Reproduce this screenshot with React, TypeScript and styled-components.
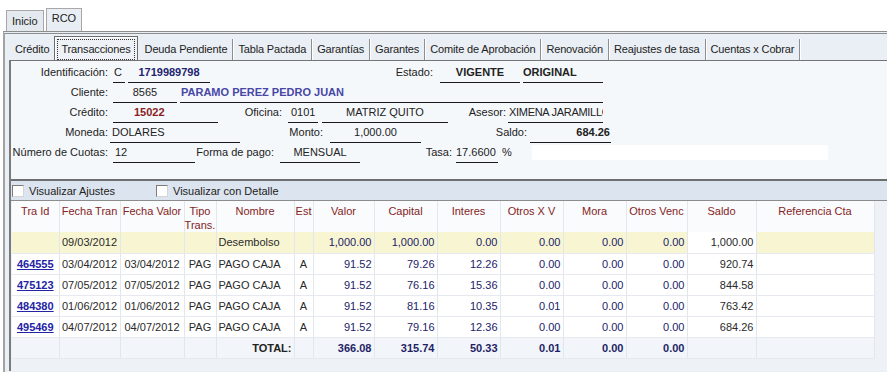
import React from "react";
import styled, { createGlobalStyle, css } from "styled-components";

const GlobalStyle = createGlobalStyle`
  html, body {
    margin: 0;
    padding: 0;
    background: #ffffff;
  }
  body {
    font-family: "Liberation Sans", Arial, sans-serif;
    font-size: 11px;
    color: #222222;
  }
`;

const Page = styled.div`
  width: 887px;
  height: 372px;
  overflow: hidden;
  padding-top: 8px;
  box-sizing: border-box;
`;

const OuterTabs = styled.div`
  display: flex;
  align-items: flex-end;
  height: 23px;
  padding-left: 6px;
`;

const OuterTab = styled.div<{ $active?: boolean }>`
  box-sizing: border-box;
  height: ${(p) => (p.$active ? 23 : 21)}px;
  padding: ${(p) => (p.$active ? "0 5px 4px" : "0 5px")};
  margin-left: ${(p) => (p.$active ? 2 : 0)}px;
  border: 1px solid #a8a8a8;
  border-bottom: none;
  background: ${(p) => (p.$active ? "#e9eef4" : "#e3e9ef")};
  display: flex;
  align-items: center;
`;

const OuterPanel = styled.div`
  margin-left: 3px;
  border-left: 2px solid #a3a3a3;
  border-top: 3px double #8d8d8d;
  background: #eaeff5;
  padding: 2px 0 0 4px;
  height: 340px;
`;

const InnerTabs = styled.div`
  display: flex;
  align-items: flex-end;
  height: 24px;
  border-bottom: 1px solid #767676;
  padding-left: 1px;
  letter-spacing: -0.15px;
`;

const InnerTab = styled.div<{ $active?: boolean; $first?: boolean }>`
  box-sizing: border-box;
  height: 21px;
  line-height: 21px;
  padding: 0 5px;
  white-space: nowrap;
  border-right: ${(p) => (p.$first ? "none" : "1px solid #8e8e8e")};
  box-shadow: ${(p) => (p.$first ? "none" : "1px 0 0 #ffffff")};
  ${(p) =>
    p.$active &&
    css`
      height: 24px;
      padding: 2px 2px 1px;
      margin: 0 2px 0 0;
      line-height: 19px;
      border: 1px solid #6c6c6c;
      border-bottom: none;
      box-shadow: inset 1px 1px 0 #ffffff;
      background: #eef2f7;
    `}
`;

const FocusBox = styled.span`
  display: block;
  padding: 0 3px;
  border: 1px dotted #333333;
`;

const Body = styled.div`
  border-left: 2px solid #7a7a7a;
`;

const FormPanel = styled.div`
  box-sizing: border-box;
  height: 118px;
  background: #f5f8fb;
  padding: 3px 0 0 0;
  display: flex;
  flex-direction: column;
  gap: 1px;
`;

const FieldRow = styled.div`
  display: flex;
  height: 19px;
  align-items: stretch;
`;

const Label = styled.div<{ $w: number; $pr?: number }>`
  width: ${(p) => p.$w}px;
  flex: none;
  box-sizing: border-box;
  text-align: right;
  padding-right: ${(p) => p.$pr ?? 2}px;
  line-height: 17px;
  white-space: nowrap;
`;

const Value = styled.div<{
  $w: number;
  $ml?: number;
  $align?: "left" | "center" | "right";
  $pl?: number;
  $pr?: number;
  $bold?: boolean;
  $color?: string;
  $tight?: boolean;
}>`
  width: ${(p) => p.$w}px;
  flex: none;
  box-sizing: border-box;
  margin-left: ${(p) => p.$ml ?? 0}px;
  padding-left: ${(p) => p.$pl ?? 0}px;
  padding-right: ${(p) => p.$pr ?? 0}px;
  text-align: ${(p) => p.$align ?? "left"};
  font-weight: ${(p) => (p.$bold ? 700 : 400)};
  color: ${(p) => p.$color ?? "#222222"};
  letter-spacing: ${(p) => (p.$tight ? "-0.3px" : "normal")};
  border-bottom: 1px solid #1a1a1a;
  line-height: 17px;
  white-space: nowrap;
  overflow: hidden;
`;

const Plain = styled.div<{ $ml?: number }>`
  margin-left: ${(p) => p.$ml ?? 0}px;
  line-height: 17px;
`;

const BlankInput = styled.div<{ $ml: number; $w: number }>`
  margin-left: ${(p) => p.$ml}px;
  width: ${(p) => p.$w}px;
  height: 15px;
  margin-top: 1px;
  background: #ffffff;
  border-radius: 2px;
`;

const CheckBand = styled.div`
  border-top: 2px solid #6e6e6e;
  border-bottom: 1px solid #8c8c8c;
  height: 19px;
  background: #dce5ef;
  display: flex;
  align-items: center;
  padding-left: 1px;
`;

const CheckGroup = styled.label<{ $w?: number }>`
  display: flex;
  align-items: center;
  gap: 5px;
  width: ${(p) => (p.$w ? `${p.$w}px` : "auto")};
`;

const CheckBox = styled.span`
  box-sizing: border-box;
  width: 12px;
  height: 12px;
  background: #ffffff;
  border: 1px solid #d4d4d4;
  border-top-color: #7b7b7b;
  border-left-color: #7b7b7b;
`;

const TableArea = styled.div`
  background: #eef2f7;
  height: 170px;
  padding-left: 1px;
`;

const Grid = styled.table`
  border-collapse: collapse;
  table-layout: fixed;
  width: 862px;
  background: #ffffff;
`;

const Th = styled.th`
  height: 30px;
  box-sizing: border-box;
  padding: 3px 0 0;
  vertical-align: top;
  text-align: center;
  font-weight: 400;
  line-height: 14px;
  color: #862424;
  background: #f9fbfd;
  border-right: 1px solid #e2e7ee;
`;

type Kind = "center" | "num" | "saldo" | "text";

const Td = styled.td<{ $kind: Kind; $bg?: string; $total?: boolean }>`
  height: 21px;
  box-sizing: border-box;
  padding: 0 2px;
  line-height: 20px;
  white-space: nowrap;
  overflow: hidden;
  border-right: 1px solid #e2e7ee;
  border-bottom: 1px solid #e6eaf0;
  background: ${(p) => p.$bg ?? "#ffffff"};
  text-align: ${(p) =>
    p.$kind === "num" || p.$kind === "saldo" ? "right" : p.$kind === "text" ? "left" : "center"};
  color: ${(p) => (p.$kind === "num" ? "#22226a" : "#2a2a2a")};
  ${(p) =>
    p.$total &&
    css`
      font-weight: 700;
      color: #1f1f66;
      background: #f2f5f9;
    `}
`;

const IdLink = styled.a`
  color: #2323a6;
  font-weight: 700;
  text-decoration: underline;
`;

type Row = {
  id: string;
  ft: string;
  fv: string;
  tipo: string;
  nombre: string;
  est: string;
  valor: string;
  capital: string;
  interes: string;
  oxv: string;
  mora: string;
  ov: string;
  saldo: string;
  first?: boolean;
};

const rows: Row[] = [
  { id: "", ft: "09/03/2012", fv: "", tipo: "", nombre: "Desembolso", est: "", valor: "1,000.00", capital: "1,000.00", interes: "0.00", oxv: "0.00", mora: "0.00", ov: "0.00", saldo: "1,000.00", first: true },
  { id: "464555", ft: "03/04/2012", fv: "03/04/2012", tipo: "PAG", nombre: "PAGO CAJA", est: "A", valor: "91.52", capital: "79.26", interes: "12.26", oxv: "0.00", mora: "0.00", ov: "0.00", saldo: "920.74" },
  { id: "475123", ft: "07/05/2012", fv: "07/05/2012", tipo: "PAG", nombre: "PAGO CAJA", est: "A", valor: "91.52", capital: "76.16", interes: "15.36", oxv: "0.00", mora: "0.00", ov: "0.00", saldo: "844.58" },
  { id: "484380", ft: "01/06/2012", fv: "01/06/2012", tipo: "PAG", nombre: "PAGO CAJA", est: "A", valor: "91.52", capital: "81.16", interes: "10.35", oxv: "0.01", mora: "0.00", ov: "0.00", saldo: "763.42" },
  { id: "495469", ft: "04/07/2012", fv: "04/07/2012", tipo: "PAG", nombre: "PAGO CAJA", est: "A", valor: "91.52", capital: "79.16", interes: "12.36", oxv: "0.00", mora: "0.00", ov: "0.00", saldo: "684.26" },
];

const columns = [
  { title: "Tra Id", w: 47 },
  { title: "Fecha Tran", w: 61 },
  { title: "Fecha Valor", w: 64 },
  { title: "Tipo Trans.", w: 32 },
  { title: "Nombre", w: 78 },
  { title: "Est", w: 19 },
  { title: "Valor", w: 61 },
  { title: "Capital", w: 63 },
  { title: "Interes", w: 63 },
  { title: "Otros X V", w: 63 },
  { title: "Mora", w: 63 },
  { title: "Otros Venc", w: 61 },
  { title: "Saldo", w: 69 },
  { title: "Referencia Cta", w: 118 },
];

const innerTabs = [
  "Crédito",
  "Transacciones",
  "Deuda Pendiente",
  "Tabla Pactada",
  "Garantías",
  "Garantes",
  "Comite de Aprobación",
  "Renovación",
  "Reajustes de tasa",
  "Cuentas x Cobrar",
];

export default function App() {
  const yellow = "#f8f6d2";
  return (
    <Page>
      <GlobalStyle />
      <OuterTabs>
        <OuterTab>Inicio</OuterTab>
        <OuterTab $active>RCO</OuterTab>
      </OuterTabs>
      <OuterPanel>
        <InnerTabs>
          {innerTabs.map((t, i) =>
            t === "Transacciones" ? (
              <InnerTab key={t} $active>
                <FocusBox>{t}</FocusBox>
              </InnerTab>
            ) : (
              <InnerTab key={t} $first={i === 0}>
                {t}
              </InnerTab>
            )
          )}
        </InnerTabs>
        <Body>
          <FormPanel>
            <FieldRow>
              <Label $w={99}>Identificación:</Label>
              <Value $w={12} $ml={3} $pl={1}>C</Value>
              <Value $w={82} $ml={3} $align="center" $bold $color="#24246e">1719989798</Value>
              <Label $w={225}>Estado:</Label>
              <Value $w={80} $ml={5} $align="center" $bold>VIGENTE</Value>
              <Value $w={80} $ml={3} $bold>ORIGINAL</Value>
            </FieldRow>
            <FieldRow>
              <Label $w={99}>Cliente:</Label>
              <Value $w={64} $ml={3} $align="center">8565</Value>
              <Value $w={423} $ml={3} $pl={1} $bold $color="#4747a6">PARAMO PEREZ PEDRO JUAN</Value>
            </FieldRow>
            <FieldRow>
              <Label $w={99}>Crédito:</Label>
              <Value $w={105} $ml={3} $pl={21} $bold $color="#8a1d1d">15022</Value>
              <Label $w={66}>Oficina:</Label>
              <Value $w={30} $ml={4} $pl={3}>0101</Value>
              <Value $w={126} $ml={4} $align="center">MATRIZ QUITO</Value>
              <Label $w={59} $pr={1}>Asesor:</Label>
              <Value $w={95} $ml={1} $pl={1} $tight>XIMENA JARAMILLO</Value>
            </FieldRow>
            <FieldRow>
              <Label $w={99}>Moneda:</Label>
              <Value $w={130} $pl={2}>DOLARES</Value>
              <Label $w={85}>Monto:</Label>
              <Value $w={91} $ml={5} $align="center">1,000.00</Value>
              <Label $w={107} $pr={1}>Saldo:</Label>
              <Value $w={81} $ml={2} $align="right" $pr={1} $bold>684.26</Value>
            </FieldRow>
            <FieldRow>
              <Label $w={99}>Número de Cuotas:</Label>
              <Value $w={82} $ml={3} $pl={2}>12</Value>
              <Label $w={82} $pr={3}>Forma de pago:</Label>
              <Value $w={80} $ml={3} $align="center">MENSUAL</Value>
              <Label $w={93} $pr={1}>Tasa:</Label>
              <Value $w={42} $ml={3}>17.6600</Value>
              <Plain $ml={4}>%</Plain>
              <BlankInput $ml={20} $w={296} />
            </FieldRow>
          </FormPanel>
          <CheckBand>
            <CheckGroup $w={144}>
              <CheckBox />
              Visualizar Ajustes
            </CheckGroup>
            <CheckGroup>
              <CheckBox />
              Visualizar con Detalle
            </CheckGroup>
          </CheckBand>
          <TableArea>
            <Grid>
              <colgroup>
                {columns.map((c) => (
                  <col key={c.title} style={{ width: c.w }} />
                ))}
              </colgroup>
              <thead>
                <tr>
                  {columns.map((c) => (
                    <Th key={c.title}>{c.title}</Th>
                  ))}
                </tr>
              </thead>
              <tbody>
                {rows.map((r, i) => {
                  const bg = r.first ? yellow : undefined;
                  return (
                    <tr key={i}>
                      <Td $kind="center" $bg={bg}>{r.id && <IdLink>{r.id}</IdLink>}</Td>
                      <Td $kind="center" $bg={bg}>{r.ft}</Td>
                      <Td $kind="center" $bg={bg}>{r.fv}</Td>
                      <Td $kind="center" $bg={bg}>{r.tipo}</Td>
                      <Td $kind="text" $bg={bg}>{r.nombre}</Td>
                      <Td $kind="center" $bg={bg}>{r.est}</Td>
                      <Td $kind="num" $bg={bg}>{r.valor}</Td>
                      <Td $kind="num" $bg={bg}>{r.capital}</Td>
                      <Td $kind="num" $bg={bg}>{r.interes}</Td>
                      <Td $kind="num" $bg={bg}>{r.oxv}</Td>
                      <Td $kind="num" $bg={bg}>{r.mora}</Td>
                      <Td $kind="num" $bg={bg}>{r.ov}</Td>
                      <Td $kind="saldo">{r.saldo}</Td>
                      <Td $kind="text" $bg={bg}></Td>
                    </tr>
                  );
                })}
                <tr>
                  <Td $kind="center" $total></Td>
                  <Td $kind="center" $total></Td>
                  <Td $kind="center" $total></Td>
                  <Td $kind="center" $total></Td>
                  <Td $kind="num" $total style={{ color: "#222222" }}>TOTAL:</Td>
                  <Td $kind="center" $total></Td>
                  <Td $kind="num" $total>366.08</Td>
                  <Td $kind="num" $total>315.74</Td>
                  <Td $kind="num" $total>50.33</Td>
                  <Td $kind="num" $total>0.01</Td>
                  <Td $kind="num" $total>0.00</Td>
                  <Td $kind="num" $total>0.00</Td>
                  <Td $kind="saldo" $total></Td>
                  <Td $kind="text" $total></Td>
                </tr>
              </tbody>
            </Grid>
          </TableArea>
        </Body>
      </OuterPanel>
    </Page>
  );
}
